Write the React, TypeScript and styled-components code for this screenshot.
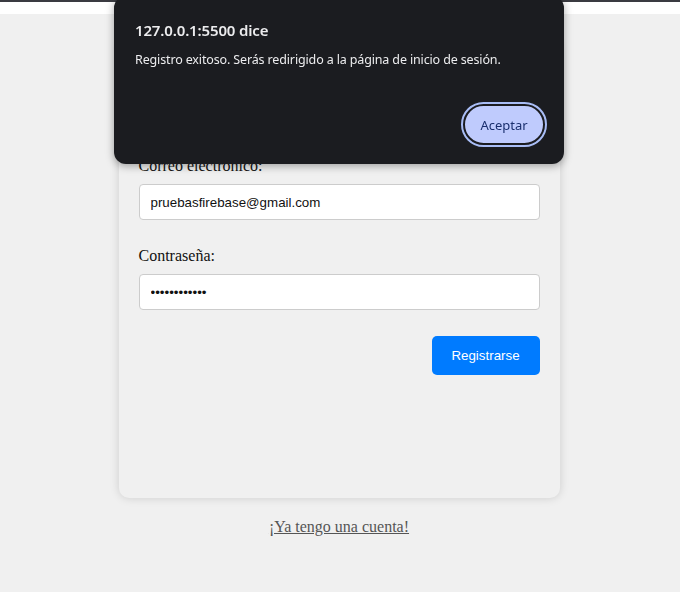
import React from "react";
import styled, { createGlobalStyle } from "styled-components";

const Global = createGlobalStyle`
  html, body { margin: 0; padding: 0; background: #f0f0f0; }
  body { font-family: "Liberation Serif", serif; }
`;

const TopStrip = styled.div`
  height: 12px;
  border-top: 2px solid #3a3b41;
  background: #ffffff;
`;

const Main = styled.main`
  display: flex;
  flex-direction: column;
  align-items: center;
  padding-right: 2px;
`;

const Card = styled.div`
  box-sizing: border-box;
  width: 441px;
  height: 458px;
  margin-top: 26px;
  padding: 117px 20px 0;
  background: #f0f0f0;
  border-radius: 10px;
  box-shadow: 0 0 10px rgba(0, 0, 0, 0.15);
`;

const Form = styled.form`
  display: flex;
  flex-direction: column;
`;

const Label = styled.label`
  display: block;
  font-family: "Liberation Serif", serif;
  font-size: 16px;
  line-height: 18px;
  color: #111;
  margin-bottom: 9px;
`;

const Input = styled.input`
  box-sizing: border-box;
  width: 100%;
  height: 36px;
  padding: 0 11px;
  border: 1px solid #cccccc;
  border-radius: 4px;
  background: #ffffff;
  font-family: "Liberation Sans", Arial, sans-serif;
  font-size: 13.33px;
  color: #111;
  margin-bottom: ${(p: { $gap: number }) => p.$gap}px;
  outline: none;
`;

const Submit = styled.button`
  align-self: flex-end;
  width: 108px;
  height: 39px;
  border: none;
  border-radius: 5px;
  background: #007bff;
  color: #ffffff;
  font-family: "Liberation Sans", Arial, sans-serif;
  font-size: 13.33px;
`;

const LinkText = styled.a`
  margin-top: 20px;
  font-family: "Liberation Serif", serif;
  font-size: 16px;
  line-height: 18px;
  color: #555555;
  text-decoration: underline;
`;

const Dialog = styled.div`
  position: fixed;
  left: 114px;
  top: -4px;
  box-sizing: border-box;
  width: 450px;
  height: 168px;
  padding: 24px 19px 19px 21px;
  display: flex;
  flex-direction: column;
  background: #1b1c20;
  border-radius: 12px;
  box-shadow: 0 2px 8px rgba(0, 0, 0, 0.35);
  font-family: "Noto Sans", "Open Sans", sans-serif;
`;

const DialogTitle = styled.div`
  font-size: 15px;
  font-weight: 600;
  line-height: 20px;
  letter-spacing: -0.15px;
  color: #ececee;
`;

const DialogMessage = styled.div`
  margin-top: 11px;
  font-size: 12.5px;
  line-height: 18px;
  letter-spacing: -0.14px;
  color: #ececee;
`;

const DialogActions = styled.div`
  margin-top: auto;
  display: flex;
  justify-content: flex-end;
`;

const AcceptButton = styled.button`
  width: 82px;
  height: 41px;
  border: 2px solid #1b1c20;
  border-radius: 21px;
  outline: 2px solid #a9bdf6;
  background: #bfcbfd;
  color: #1a2f6e;
  font-family: "Noto Sans", "Open Sans", sans-serif;
  font-size: 13px;
`;

export default function App() {
  return (
    <>
      <Global />
      <TopStrip />
      <Main>
        <Card>
          <Form onSubmit={(e) => e.preventDefault()}>
            <Label htmlFor="email">Correo electrónico:</Label>
            <Input id="email" type="email" $gap={27} defaultValue="pruebasfirebase@gmail.com" />
            <Label htmlFor="pass">Contraseña:</Label>
            <Input id="pass" type="password" $gap={26} defaultValue="contraseña12" />
            <Submit type="submit">Registrarse</Submit>
          </Form>
        </Card>
        <LinkText href="#">¡Ya tengo una cuenta!</LinkText>
      </Main>
      <Dialog role="alertdialog">
        <DialogTitle>127.0.0.1:5500 dice</DialogTitle>
        <DialogMessage>Registro exitoso. Serás redirigido a la página de inicio de sesión.</DialogMessage>
        <DialogActions>
          <AcceptButton>Aceptar</AcceptButton>
        </DialogActions>
      </Dialog>
    </>
  );
}
